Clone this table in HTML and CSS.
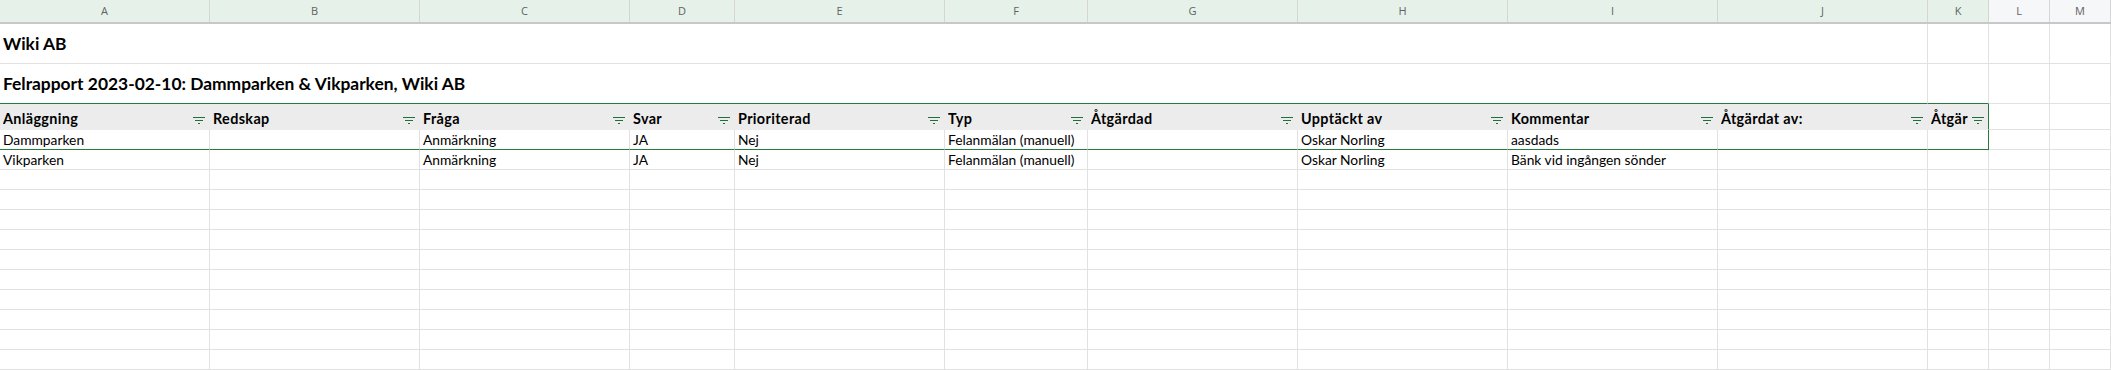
FILE: index.html
```html
<!DOCTYPE html>
<html lang="sv">
<head>
<meta charset="utf-8">
<title>Felrapport</title>
<link rel="stylesheet" href="styles.css">
</head>
<body>
<div class="sheet">
  <div class="row colheads">
    <div class="ch sel">A</div><div class="ch sel">B</div><div class="ch sel">C</div><div class="ch sel">D</div><div class="ch sel">E</div><div class="ch sel">F</div><div class="ch sel">G</div><div class="ch sel">H</div><div class="ch sel">I</div><div class="ch sel">J</div><div class="ch sel">K</div><div class="ch">L</div><div class="ch">M</div>
  </div>

  <div class="row r-title">
    <div class="cell merged title">Wiki AB</div><div class="cell"></div><div class="cell"></div><div class="cell"></div>
  </div>
  <div class="row r-title">
    <div class="cell merged title tb">Felrapport 2023-02-10: Dammparken &amp; Vikparken, Wiki AB</div><div class="cell tb"></div><div class="cell"></div><div class="cell"></div>
  </div>

  <div class="row r-head">
    <div class="cell th"><span class="t">Anläggning</span><svg class="flt" viewBox="0 0 12 8"><path d="M0 .5h12M2 3.5h8M5 6.5h2"/></svg></div>
    <div class="cell th"><span class="t">Redskap</span><svg class="flt" viewBox="0 0 12 8"><path d="M0 .5h12M2 3.5h8M5 6.5h2"/></svg></div>
    <div class="cell th"><span class="t">Fråga</span><svg class="flt" viewBox="0 0 12 8"><path d="M0 .5h12M2 3.5h8M5 6.5h2"/></svg></div>
    <div class="cell th"><span class="t">Svar</span><svg class="flt" viewBox="0 0 12 8"><path d="M0 .5h12M2 3.5h8M5 6.5h2"/></svg></div>
    <div class="cell th"><span class="t">Prioriterad</span><svg class="flt" viewBox="0 0 12 8"><path d="M0 .5h12M2 3.5h8M5 6.5h2"/></svg></div>
    <div class="cell th"><span class="t">Typ</span><svg class="flt" viewBox="0 0 12 8"><path d="M0 .5h12M2 3.5h8M5 6.5h2"/></svg></div>
    <div class="cell th"><span class="t">Åtgärdad</span><svg class="flt" viewBox="0 0 12 8"><path d="M0 .5h12M2 3.5h8M5 6.5h2"/></svg></div>
    <div class="cell th"><span class="t">Upptäckt av</span><svg class="flt" viewBox="0 0 12 8"><path d="M0 .5h12M2 3.5h8M5 6.5h2"/></svg></div>
    <div class="cell th"><span class="t">Kommentar</span><svg class="flt" viewBox="0 0 12 8"><path d="M0 .5h12M2 3.5h8M5 6.5h2"/></svg></div>
    <div class="cell th"><span class="t">Åtgärdat av:</span><svg class="flt" viewBox="0 0 12 8"><path d="M0 .5h12M2 3.5h8M5 6.5h2"/></svg></div>
    <div class="cell th tr"><span class="t">Åtgärdat datum</span><svg class="flt" viewBox="0 0 12 8"><path d="M0 .5h12M2 3.5h8M5 6.5h2"/></svg></div>
    <div class="cell"></div><div class="cell"></div>
  </div>

  <div class="row r-data">
    <div class="cell tb">Dammparken</div><div class="cell tb"></div><div class="cell tb">Anmärkning</div><div class="cell tb">JA</div><div class="cell tb">Nej</div><div class="cell tb">Felanmälan (manuell)</div><div class="cell tb"></div><div class="cell tb">Oskar Norling</div><div class="cell tb">aasdads</div><div class="cell tb"></div><div class="cell tb tr"></div><div class="cell"></div><div class="cell"></div>
  </div>
  <div class="row r-data">
    <div class="cell">Vikparken</div><div class="cell"></div><div class="cell">Anmärkning</div><div class="cell">JA</div><div class="cell">Nej</div><div class="cell">Felanmälan (manuell)</div><div class="cell"></div><div class="cell">Oskar Norling</div><div class="cell">Bänk vid ingången sönder</div><div class="cell"></div><div class="cell"></div><div class="cell"></div><div class="cell"></div>
  </div>

  <div class="row r-data"><div class="cell"></div><div class="cell"></div><div class="cell"></div><div class="cell"></div><div class="cell"></div><div class="cell"></div><div class="cell"></div><div class="cell"></div><div class="cell"></div><div class="cell"></div><div class="cell"></div><div class="cell"></div><div class="cell"></div></div>
  <div class="row r-data"><div class="cell"></div><div class="cell"></div><div class="cell"></div><div class="cell"></div><div class="cell"></div><div class="cell"></div><div class="cell"></div><div class="cell"></div><div class="cell"></div><div class="cell"></div><div class="cell"></div><div class="cell"></div><div class="cell"></div></div>
  <div class="row r-data"><div class="cell"></div><div class="cell"></div><div class="cell"></div><div class="cell"></div><div class="cell"></div><div class="cell"></div><div class="cell"></div><div class="cell"></div><div class="cell"></div><div class="cell"></div><div class="cell"></div><div class="cell"></div><div class="cell"></div></div>
  <div class="row r-data"><div class="cell"></div><div class="cell"></div><div class="cell"></div><div class="cell"></div><div class="cell"></div><div class="cell"></div><div class="cell"></div><div class="cell"></div><div class="cell"></div><div class="cell"></div><div class="cell"></div><div class="cell"></div><div class="cell"></div></div>
  <div class="row r-data"><div class="cell"></div><div class="cell"></div><div class="cell"></div><div class="cell"></div><div class="cell"></div><div class="cell"></div><div class="cell"></div><div class="cell"></div><div class="cell"></div><div class="cell"></div><div class="cell"></div><div class="cell"></div><div class="cell"></div></div>
  <div class="row r-data"><div class="cell"></div><div class="cell"></div><div class="cell"></div><div class="cell"></div><div class="cell"></div><div class="cell"></div><div class="cell"></div><div class="cell"></div><div class="cell"></div><div class="cell"></div><div class="cell"></div><div class="cell"></div><div class="cell"></div></div>
  <div class="row r-data"><div class="cell"></div><div class="cell"></div><div class="cell"></div><div class="cell"></div><div class="cell"></div><div class="cell"></div><div class="cell"></div><div class="cell"></div><div class="cell"></div><div class="cell"></div><div class="cell"></div><div class="cell"></div><div class="cell"></div></div>
  <div class="row r-data"><div class="cell"></div><div class="cell"></div><div class="cell"></div><div class="cell"></div><div class="cell"></div><div class="cell"></div><div class="cell"></div><div class="cell"></div><div class="cell"></div><div class="cell"></div><div class="cell"></div><div class="cell"></div><div class="cell"></div></div>
  <div class="row r-data"><div class="cell"></div><div class="cell"></div><div class="cell"></div><div class="cell"></div><div class="cell"></div><div class="cell"></div><div class="cell"></div><div class="cell"></div><div class="cell"></div><div class="cell"></div><div class="cell"></div><div class="cell"></div><div class="cell"></div></div>
  <div class="row r-data"><div class="cell"></div><div class="cell"></div><div class="cell"></div><div class="cell"></div><div class="cell"></div><div class="cell"></div><div class="cell"></div><div class="cell"></div><div class="cell"></div><div class="cell"></div><div class="cell"></div><div class="cell"></div><div class="cell"></div></div>
  <div class="row r-data"><div class="cell"></div><div class="cell"></div><div class="cell"></div><div class="cell"></div><div class="cell"></div><div class="cell"></div><div class="cell"></div><div class="cell"></div><div class="cell"></div><div class="cell"></div><div class="cell"></div><div class="cell"></div><div class="cell"></div></div>
</div>
</body>
</html>
```

FILE: styles.css
```css
html, body {
  margin: 0;
  padding: 0;
  background: #ffffff;
  overflow: hidden;
}

.sheet {
  width: 2111px;
  height: 370px;
  overflow: hidden;
  font-family: Lato, "Open Sans", sans-serif;
  color: #000000;
}

.row {
  display: grid;
  grid-template-columns: 210px 210px 210px 105px 210px 143px 210px 210px 210px 210px 61px 61px 61px;
}

.colheads {
  height: 24px;
  border-bottom: 2px solid #c8c8c8;
  box-sizing: border-box;
}

.ch {
  box-sizing: border-box;
  border-right: 1px solid #d5d5d5;
  background: #f6f7f9;
  font-family: "Open Sans", "Liberation Sans", sans-serif;
  font-size: 11px;
  line-height: 22px;
  text-align: center;
  color: #626262;
}

.ch.sel {
  background: #e6f2e9;
}

.cell {
  box-sizing: border-box;
  border-right: 1px solid #e1e1e1;
  border-bottom: 1px solid #e1e1e1;
  padding: 0 3px 0 3px;
  display: flex;
  align-items: flex-end;
  overflow: hidden;
  white-space: nowrap;
  font-size: 13.8px;
  line-height: 19px;
  min-width: 0;
}

.r-title { height: 40px; }
.r-head  { height: 26px; }
.r-data  { height: 20px; }

.merged {
  grid-column: 1 / 11;
}

.title {
  font-weight: 700;
  font-size: 17.4px;
  line-height: 22px;
  padding-bottom: 8px;
}

.th {
  background: #ececec;
  border-right-color: #ececec;
  border-bottom-color: #ececec;
  font-weight: 700;
  font-size: 14.4px;
  letter-spacing: 0.35px;
  padding: 0 4px 1px 3px;
  gap: 4px;
}

.th .t {
  flex: 1 1 auto;
  min-width: 0;
  overflow: hidden;
}

.flt {
  flex: 0 0 12px;
  width: 12px;
  height: 8px;
  margin-bottom: 3px;
  stroke: #1f6f3c;
  stroke-width: 1;
  fill: none;
}

.tb {
  border-bottom-color: #2a7a3f;
}

.tr {
  border-right-color: #2a7a3f;
}
```
